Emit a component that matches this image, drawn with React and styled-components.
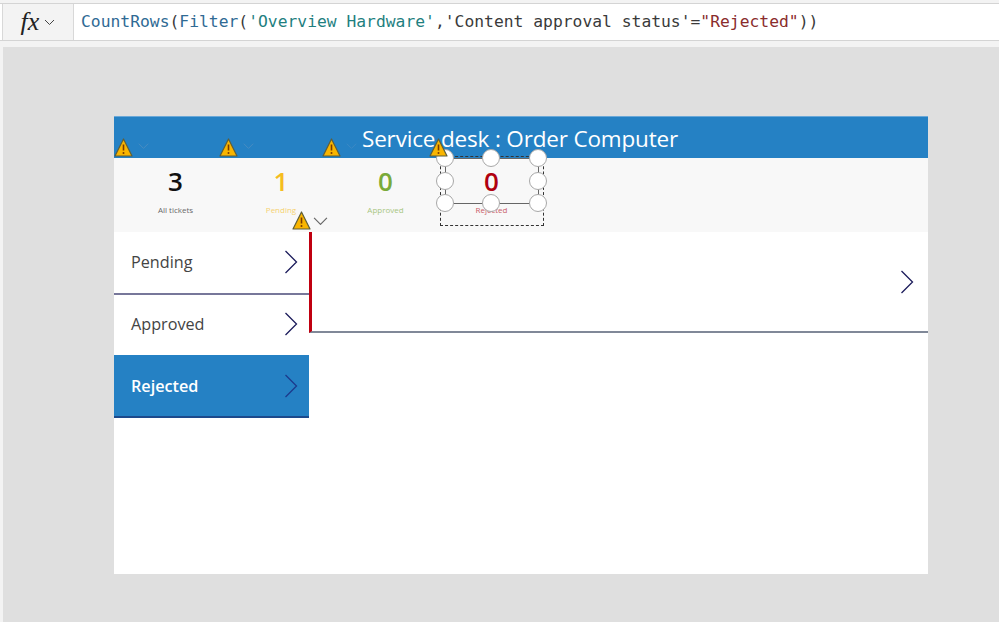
import React from 'react'
import styled, { createGlobalStyle } from 'styled-components'

const Global = createGlobalStyle`
  html, body {
    margin: 0;
    padding: 0;
    background: #fff;
  }
`

const Page = styled.div`
  width: 999px;
  height: 622px;
  overflow: hidden;
  display: flex;
  flex-direction: column;
  background: #f3f3f3;
  font-family: "Open Sans", sans-serif;
`

const FormulaBar = styled.div`
  margin-top: 3px;
  height: 38px;
  display: flex;
  background: #fff;
  border-top: 1px solid #d4d4d4;
  border-bottom: 1px solid #d4d4d4;
  box-sizing: border-box;
`

const FxButton = styled.div`
  width: 70px;
  margin-left: 2px;
  display: flex;
  align-items: center;
  justify-content: center;
  gap: 5px;
  background: #f3f3f3;
  border-left: 1px solid #d8d8d8;
  border-right: 1px solid #d8d8d8;
`

const FxLabel = styled.span`
  font-family: "Liberation Serif", serif;
  font-style: italic;
  font-size: 26px;
  line-height: 1;
  color: #222;
`

const Formula = styled.div`
  padding-left: 7px;
  font-family: "DejaVu Sans Mono", monospace;
  font-size: 16.33px;
  line-height: 35px;
  color: #3a3a3a;
  white-space: pre;
`

const Token = styled.span`
  color: ${p => p.$color};
`

const Canvas = styled.div`
  margin-top: 6px;
  margin-left: 3px;
  flex: 1;
  background: #dfdfdf;
  padding: 69px 0 0 111px;
`

const Screen = styled.div`
  position: relative;
  width: 814px;
  height: 458px;
  background: #fff;
`

const Header = styled.div`
  height: 42px;
  box-sizing: border-box;
  display: flex;
  align-items: center;
  justify-content: center;
  padding: 1px 2px 0 0;
  background: #2581c4;
  border-top: 1px solid #6aa8d8;
  color: #fff;
  font-size: 22.5px;
  letter-spacing: -0.17px;
`

const Stats = styled.div`
  height: 74px;
  display: grid;
  grid-template-columns: 105px 106px 103px 109px;
  padding-left: 9px;
  background: #f8f8f8;
`

const Stat = styled.div`
  display: flex;
  flex-direction: column;
  align-items: center;
  color: ${p => p.$color};
`

const StatValue = styled.div`
  margin-top: 5px;
  font-size: 26px;
  font-weight: 600;
  line-height: 36px;
`

const StatLabel = styled.div`
  margin-top: 3px;
  font-size: 8px;
  line-height: 16px;
  opacity: 0.65;
`

const Body = styled.div`
  display: flex;
`

const Nav = styled.div`
  width: 195px;
`

const NavItem = styled.div`
  height: ${p => p.$height}px;
  box-sizing: border-box;
  display: flex;
  align-items: center;
  justify-content: space-between;
  padding: 0 11px ${p => (p.$ruled ? 1 : 0)}px 17px;
  font-size: 16.2px;
  font-weight: ${p => (p.$active ? 600 : 500)};
  color: ${p => (p.$active ? '#fff' : '#444')};
  background: ${p => (p.$active ? '#2581c4' : '#fff')};
  border-bottom: 2px solid ${p => (p.$active ? '#1c4a8c' : p.$ruled ? '#77779a' : 'transparent')};
`

const Gallery = styled.div`
  flex: 1;
  height: 101px;
  box-sizing: border-box;
  display: flex;
  align-items: center;
  justify-content: flex-end;
  padding: 1px 14px 0 0;
  border-left: 3px solid #c00010;
  border-bottom: 2px solid #808898;
`

const Warning = styled.svg`
  position: absolute;
  left: ${p => p.$x}px;
  top: ${p => p.$y}px;
`

const Chevron = styled.svg`
  position: absolute;
  left: ${p => p.$x}px;
  top: ${p => p.$y}px;
`

const Selection = styled.div`
  position: absolute;
  left: 326px;
  top: 40px;
  width: 104px;
  height: 70px;
  box-sizing: border-box;
  border: 1px dashed #333;
`

const SelectionFrame = styled.div`
  position: absolute;
  left: 331px;
  top: 42px;
  width: 94px;
  height: 46px;
  box-sizing: border-box;
  border: 1px solid #666;
`

const Handle = styled.div`
  position: absolute;
  left: ${p => p.$x - 9}px;
  top: ${p => p.$y - 9}px;
  width: 18px;
  height: 18px;
  box-sizing: border-box;
  border-radius: 50%;
  background: #fff;
  border: 1.5px solid #a8a8a8;
`

const WarningIcon = ({ x, y }) => (
  <Warning $x={x} $y={y} width="19" height="19" viewBox="0 0 19 19">
    <path d="M9.5 1 L18 18 H1 Z" fill="#f9b500" stroke="#5f5f3a" strokeWidth="1.2" strokeLinejoin="round" />
    <path d="M9.5 6.5 V12.5" stroke="#7a3b00" strokeWidth="1.6" />
    <circle cx="9.5" cy="15" r="1" fill="#7a3b00" />
  </Warning>
)

const ChevronDown = ({ x, y, color, size = 11 }) => (
  <Chevron $x={x} $y={y} width={size} height={size * 0.55} viewBox="0 0 16 9">
    <path d="M1 1 L8 8 L15 1" fill="none" stroke={color} strokeWidth="1.3" />
  </Chevron>
)

const ChevronRight = ({ color = '#1c1c5c' }) => (
  <svg width="14" height="24" viewBox="0 0 14 24">
    <path d="M1.5 1 L12.5 12 L1.5 23" fill="none" stroke={color} strokeWidth="1.3" />
  </svg>
)

const stats = [
  { value: '3', label: 'All tickets', color: '#111' },
  { value: '1', label: 'Pending', color: '#f5bd1f' },
  { value: '0', label: 'Approved', color: '#7aaa3a' },
  { value: '0', label: 'Rejected', color: '#b00010' },
]

const warnings = [
  [0, 22],
  [105, 22],
  [208, 22],
  [315, 22],
  [178, 95],
]

const handles = [
  [331, 42], [377, 42], [424, 42],
  [331, 65], [424, 65],
  [331, 87], [377, 87], [424, 87],
]

const App = () => (
  <Page>
    <Global />
    <FormulaBar>
      <FxButton>
        <FxLabel>fx</FxLabel>
        <svg width="11" height="7" viewBox="0 0 11 7">
          <path d="M1 1 L5.5 5.5 L10 1" fill="none" stroke="#444" strokeWidth="1" />
        </svg>
      </FxButton>
      <Formula>
        <Token $color="#2f6a94">CountRows</Token>(
        <Token $color="#2f6a94">Filter</Token>(
        <Token $color="#1f7f7f">'Overview Hardware'</Token>,'Content approval status'=
        <Token $color="#8a2c2c">"Rejected"</Token>))
      </Formula>
    </FormulaBar>
    <Canvas>
      <Screen>
        <Header>Service desk : Order Computer</Header>
        <Stats>
          {stats.map(s => (
            <Stat key={s.label} $color={s.color}>
              <StatValue>{s.value}</StatValue>
              <StatLabel>{s.label}</StatLabel>
            </Stat>
          ))}
        </Stats>
        <Body>
          <Nav>
            <NavItem $height={63} $ruled>Pending<ChevronRight /></NavItem>
            <NavItem $height={60}>Approved<ChevronRight /></NavItem>
            <NavItem $height={63} $active>Rejected<ChevronRight color="#1c3a8c" /></NavItem>
          </Nav>
          <Gallery>
            <ChevronRight />
          </Gallery>
        </Body>
        <ChevronDown x={24} y={27} color="#4d8fc2" />
        <ChevronDown x={129} y={27} color="#4d8fc2" />
        <ChevronDown x={232} y={27} color="#3f8ac4" />
        <ChevronDown x={199} y={101} color="#666" size={15} />
        <Selection />
        <SelectionFrame />
        {handles.map(([x, y]) => <Handle key={`${x}-${y}`} $x={x} $y={y} />)}
        {warnings.map(([x, y]) => <WarningIcon key={`${x}-${y}`} x={x} y={y} />)}
      </Screen>
    </Canvas>
  </Page>
)

export default App
